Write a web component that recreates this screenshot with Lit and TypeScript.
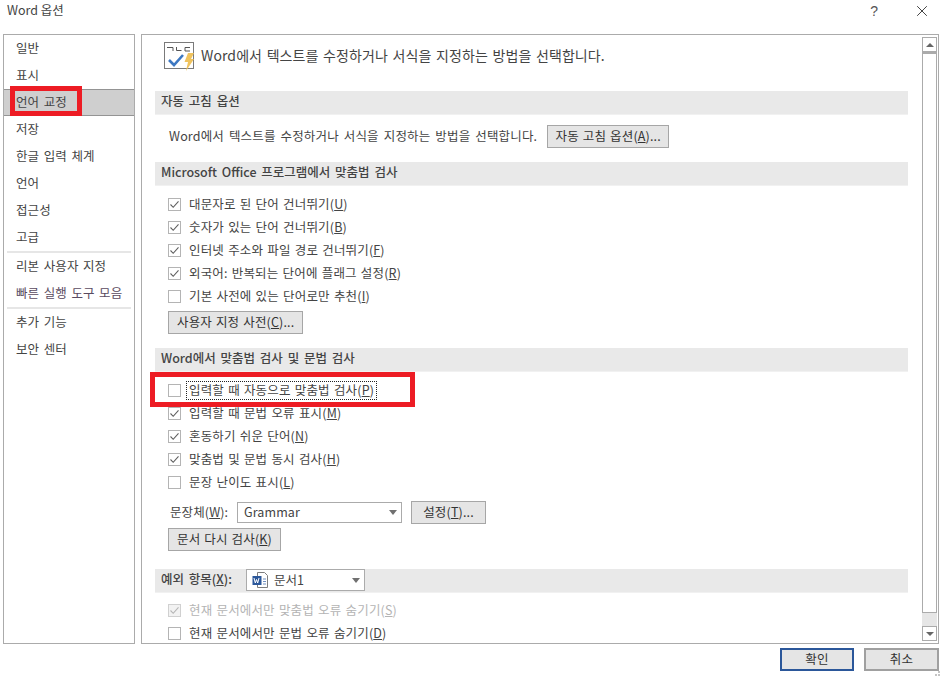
import { LitElement, html, css } from "lit";
import { customElement } from "lit/decorators.js";

const checkRow = (text: string, key: string, checked: boolean, opts: { disabled?: boolean; focus?: boolean } = {}) => html`
  <div class="row ${opts.disabled ? "disabled" : ""}">
    <span class="cb">${checked ? html`<svg width="11" height="11" viewBox="0 0 11 11"><path d="M1.5 5.5 L4.2 8.3 L9.5 2.4" fill="none" stroke="${opts.disabled ? "#b5b5b5" : "#5f5f5f"}" stroke-width="1.1"/></svg>` : ""}</span>
    <span class="label ${opts.focus ? "focus" : ""}">${text}(<u>${key}</u>)</span>
  </div>`;

@customElement("app-root")
export class AppRoot extends LitElement {
  static styles = css`
    :host {
      display: block;
      width: 941px;
      height: 676px;
      background: #fff;
      position: relative;
      overflow: hidden;
      font-family: "Noto Sans CJK KR", "Noto Sans", sans-serif;
      font-size: 12.5px;
      color: #444;
    }
    .dialog { display: flex; flex-direction: column; height: 100%; }
    .titlebar {
      height: 34px; flex: none; display: flex; align-items: flex-start; justify-content: space-between;
      padding: 0 14px 0 7px; box-sizing: border-box;
    }
    .title { font-size: 12.5px; line-height: 20px; color: #444; }
    .winbtns { display: flex; align-items: center; gap: 39px; height: 22px; }
    .help { font-size: 14px; color: #555; font-family: "Liberation Sans", sans-serif; line-height: 22px; }
    .main { display: flex; height: 611px; flex: none; padding: 0 2px 0 3px; gap: 6px; }
    .nav {
      width: 132px; box-sizing: border-box; border: 1px solid #ababab; flex: none;
      display: flex; flex-direction: column; height: 610px; overflow: hidden;
    }
    .nav-item {
      height: 27px; line-height: 25px; padding: 0 0 2px 12px; flex: none; white-space: nowrap; box-sizing: border-box;
      letter-spacing: 0.1px; word-spacing: 1.6px;
    }
    .nav-item.sel { background: #cfcfcf; border: 1px solid #949494; border-width: 1px 0; line-height: 23px; }
    .nav-item.pink { color: #594a60; }
    .nav hr { border: 0; height: 2px; background: #e6e6e6; margin: 0 3px; flex: none; }
    .panel {
      flex: 1; box-sizing: border-box; border: 1px solid #ababab; height: 610px;
      display: flex; overflow: hidden; position: relative;
    }
    .content { width: 780px; flex: none; padding: 5px 0 0 13px; box-sizing: border-box; height: 608px; overflow: hidden; }
    .hero { display: flex; align-items: center; gap: 5px; height: 33px; padding-left: 9px; margin-bottom: 18px; }
    .hero-text { font-size: 14px; color: #444; letter-spacing: 0.1px; word-spacing: 1.3px; white-space: nowrap; padding-bottom: 4px; }
    .head {
      width: 753px; height: 24px; box-sizing: border-box; background: #e9e9e9; border-bottom: 1px solid #f1f1f1;
      padding: 0 0 5px 6px; font-weight: 500; color: #444; white-space: nowrap; display: flex; align-items: center;
      word-spacing: 2px;
    }
    .line { display: flex; align-items: center; padding-left: 14px; height: 43px; gap: 10px; white-space: nowrap; margin-bottom: 4px; }
    .line-text { letter-spacing: 0.16px; word-spacing: 2px; padding-bottom: 2px; }
    .rows { padding: 7px 0 0 13px; }
    .rows.last { padding-top: 6px; }
    .row { height: 23px; display: flex; align-items: center; gap: 6px; white-space: nowrap; }
    .row.disabled { color: #b4b4b4; }
    .cb { width: 11px; height: 11px; border: 1px solid #b4b4b4; background: #fff; flex: none; display: block; line-height: 0; }
    .row.disabled .cb { border-color: #d0d0d0; background: #f2f2f2; }
    .label { padding: 0 2px 2px; margin-left: -1px; letter-spacing: 0.16px; word-spacing: 1.2px; border: 1px solid transparent; line-height: 15px; }
    .label.focus { border: 1px dotted #222; }
    button {
      font: inherit; color: #333; background: #e5e5e5; border: 1.5px solid #a6a6a6; height: 23px; padding: 0 8px 2px; margin: 0;
      box-sizing: border-box; line-height: 18px; white-space: nowrap; letter-spacing: 0.16px; word-spacing: 1px; display: block;
    }
    button.w122 { width: 122px; padding: 0 0 2px; text-align: center; }
    .b-wrap { padding: 3px 0 0 13px; margin-bottom: 14px; }
    .b-wrap.recheck { padding-top: 4px; margin-bottom: 18px; }
    .combo-line { display: flex; align-items: center; padding-left: 15px; height: 23px; margin-top: 7px; white-space: nowrap; letter-spacing: 0.1px; }
    .combo-label { width: 67px; flex: none; padding-bottom: 2px; }
    .combo {
      height: 21px; border: 1px solid #ababab; box-sizing: border-box; background: #fff; display: flex; align-items: center;
      justify-content: space-between; padding: 0 4px 0 6px;
    }
    .combo.grammar { width: 165px; flex: none; }
    .combo-text { padding-bottom: 2px; }
    .combo.doc { width: 119px; margin-left: 14px; height: 22px; padding-left: 5px; font-weight: 400; align-self: flex-start; word-spacing: 0; }
    .caret { width: 0; height: 0; border: 4px solid transparent; border-top: 5px solid #707070; border-bottom: 0; flex: none; }
    .combo-line button { margin-left: 9px; width: 75px; padding: 0 0 2px; }
    .doc-name { display: flex; align-items: center; gap: 5px; }
    .scroll {
      position: absolute; right: 1px; top: 2px; width: 15px; height: 604px; display: flex; flex-direction: column;
      box-sizing: border-box; background: #e6e6e6;
    }
    .sb-btn { height: 15px; border: 1px solid #ababab; background: #fff; box-sizing: border-box; flex: none; display: flex; align-items: center; justify-content: center; }
    .tri-up { width: 0; height: 0; border: 4px solid transparent; border-bottom: 4px solid #666; border-top: 0; }
    .tri-down { width: 0; height: 0; border: 4px solid transparent; border-top: 4px solid #666; border-bottom: 0; }
    .thumb { flex: none; height: 561px; border: 1px solid #ababab; border-top-width: 2px; background: #fff; box-sizing: border-box; }
    .track { flex: 1; }
    .footer { flex: none; display: flex; justify-content: flex-end; gap: 10px; padding-top: 3px; margin-right: 2px; }
    .footer button { width: 74px; height: 23px; padding: 0 0 2px; text-align: center; background: #e5e5e5; border: 2px solid #a0a0a0; line-height: 17px; }
    .footer button + button { width: 75px; }
    .footer button.def { border-color: #2b579a; }
    .mark { position: absolute; border: 5px solid #ed1c24; box-sizing: border-box; pointer-events: none; }
    .mark.a { left: 10px; top: 86px; width: 72px; height: 30px; }
    .mark.b { left: 150px; top: 372px; width: 265px; height: 35px; }
    .grip { position: absolute; right: 1px; bottom: 0; width: 5px; height: 5px; }
  `;

  render() {
    const nav1 = ["일반", "표시"];
    const nav2 = ["저장", "한글 입력 체계", "언어", "접근성", "고급"];
    return html`
      <div class="dialog">
        <div class="titlebar">
          <div class="title">Word 옵션</div>
          <div class="winbtns">
            <span class="help">?</span>
            <svg width="10" height="10" viewBox="0 0 10 10"><path d="M0.2 0.2 L9.8 9.8 M9.8 0.2 L0.2 9.8" stroke="#444" stroke-width="1" fill="none"/></svg>
          </div>
        </div>
        <div class="main">
          <nav class="nav">
            ${nav1.map((n) => html`<div class="nav-item">${n}</div>`)}
            <div class="nav-item sel">언어 교정</div>
            ${nav2.map((n) => html`<div class="nav-item">${n}</div>`)}
            <hr />
            <div class="nav-item">리본 사용자 지정</div>
            <div class="nav-item pink">빠른 실행 도구 모음</div>
            <hr />
            <div class="nav-item">추가 기능</div>
            <div class="nav-item">보안 센터</div>
          </nav>
          <section class="panel">
            <div class="content">
              <div class="hero">
                <svg width="32" height="30" viewBox="0 0 32 30">
                  <rect x="0.5" y="0.5" width="29" height="26" fill="#fff" stroke="#7a7a7a"/>
                  <path d="M3 5.5h6v3.5M12.5 5v3.5h5M26 5.5h-5v3.5h5" fill="none" stroke="#555" stroke-width="1"/>
                  <path d="M5 18 L10 23 L19 13" fill="none" stroke="#3d78c2" stroke-width="2.6"/>
                  <path d="M24 11 h6 l-3 6 h3 l-8 12 l2-9 h-3.5z" fill="#f0c35e"/>
                </svg>
                <span class="hero-text">Word에서 텍스트를 수정하거나 서식을 지정하는 방법을 선택합니다.</span>
              </div>
              <div class="head">자동 고침 옵션</div>
              <div class="line">
                <span class="line-text">Word에서 텍스트를 수정하거나 서식을 지정하는 방법을 선택합니다.</span>
                <button class="w122">자동 고침 옵션(<u>A</u>)...</button>
              </div>
              <div class="head">Microsoft Office 프로그램에서 맞춤법 검사</div>
              <div class="rows">
                ${checkRow("대문자로 된 단어 건너뛰기", "U", true)}
                ${checkRow("숫자가 있는 단어 건너뛰기", "B", true)}
                ${checkRow("인터넷 주소와 파일 경로 건너뛰기", "F", true)}
                ${checkRow("외국어: 반복되는 단어에 플래그 설정", "R", true)}
                ${checkRow("기본 사전에 있는 단어로만 추천", "I", false)}
              </div>
              <div class="b-wrap"><button>사용자 지정 사전(<u>C</u>)...</button></div>
              <div class="head">Word에서 맞춤법 검사 및 문법 검사</div>
              <div class="rows">
                ${checkRow("입력할 때 자동으로 맞춤법 검사", "P", false, { focus: true })}
                ${checkRow("입력할 때 문법 오류 표시", "M", true)}
                ${checkRow("혼동하기 쉬운 단어", "N", true)}
                ${checkRow("맞춤법 및 문법 동시 검사", "H", true)}
                ${checkRow("문장 난이도 표시", "L", false)}
              </div>
              <div class="combo-line">
                <span class="combo-label">문장체(<u>W</u>):</span>
                <div class="combo grammar"><span class="combo-text">Grammar</span><span class="caret"></span></div>
                <button>설정(<u>T</u>)...</button>
              </div>
              <div class="b-wrap recheck"><button>문서 다시 검사(<u>K</u>)</button></div>
              <div class="head">예외 항목(<u>X</u>):
                <div class="combo doc">
                  <span class="doc-name">
                    <svg width="17" height="16" viewBox="0 0 17 16">
                      <path d="M5.5 0.5h7l3 3v12h-10z" fill="#fff" stroke="#7d7d7d"/>
                      <rect x="0.5" y="4" width="9" height="9" fill="#2b579a"/>
                      <path d="M2 6l1.3 5 1.2-3.5 1.2 3.5 1.3-5" fill="none" stroke="#fff" stroke-width="1"/>
                      <path d="M11 7h3M11 9.5h3M11 12h3" stroke="#6f8fc0"/>
                    </svg>
                    <span class="combo-text">문서1</span>
                  </span>
                  <span class="caret"></span>
                </div>
              </div>
              <div class="rows last">
                ${checkRow("현재 문서에서만 맞춤법 오류 숨기기", "S", true, { disabled: true })}
                ${checkRow("현재 문서에서만 문법 오류 숨기기", "D", false)}
              </div>
            </div>
            <div class="scroll">
              <div class="sb-btn"><span class="tri-up"></span></div>
              <div class="thumb"></div>
              <div class="track"></div>
              <div class="sb-btn"><span class="tri-down"></span></div>
            </div>
          </section>
        </div>
        <footer class="footer">
          <button class="def">확인</button>
          <button>취소</button>
        </footer>
      </div>
      <div class="mark a"></div>
      <div class="mark b"></div>
      <svg class="grip" viewBox="0 0 5 5"><path d="M3 0h2v2H3zM0 3h2v2H0zM3 3h2v2H3z" fill="#c4c4c4"/></svg>
    `;
  }
}
